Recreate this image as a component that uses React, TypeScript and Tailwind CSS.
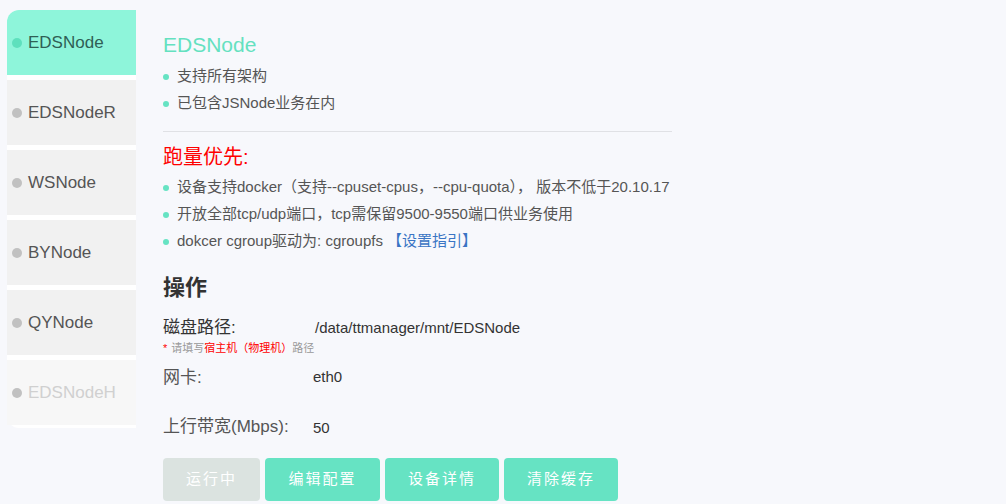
import { useState } from "react";

const nodes = ["EDSNode", "EDSNodeR", "WSNode", "BYNode", "QYNode", "EDSNodeH"];

const Dot = ({ className }: { className: string }) => (
  <span className={`inline-block w-[6px] h-[6px] rounded-full shrink-0 ${className}`} />
);

const Bullet = ({ children }: { children: React.ReactNode }) => (
  <li className="flex items-center gap-[8px] h-[27px] text-[15px] text-[#555]">
    <Dot className="bg-[#66e3c3]" />
    <span>{children}</span>
  </li>
);

const App = () => {
  const [active, setActive] = useState(0);

  return (
    <div
      className="min-h-screen w-full bg-[#f7f8fc] flex items-start"
      style={{ fontFamily: '"Liberation Sans", "Noto Sans CJK SC", sans-serif' }}
    >
      {/* sidebar */}
      <div className="ml-[7px] mt-[10px] w-[129px] bg-white rounded-tl-[12px] rounded-bl-[12px] pb-[3px] flex flex-col gap-[5px]">
        {nodes.map((name, i) => {
          const isActive = i === active;
          const disabled = i === nodes.length - 1;
          return (
            <div
              key={name}
              onClick={() => !disabled && setActive(i)}
              className={`h-[65px] flex items-center gap-[6px] pl-[5px] cursor-pointer ${
                i === 0 ? "rounded-tl-[12px]" : ""
              } ${isActive ? "bg-[#8ef5da]" : disabled ? "bg-[#f7f7f7]" : "bg-[#f1f1f1]"}`}
            >
              <span
                className={`inline-block w-[10px] h-[10px] rounded-full ${
                  isActive ? "bg-[#5ee0bd]" : "bg-[#c1c1c1]"
                }`}
              />
              <span
                className={`text-[17px] ${
                  isActive ? "text-[#2f5f55]" : disabled ? "text-[#d0d0d0]" : "text-[#555]"
                }`}
              >
                {name}
              </span>
            </div>
          );
        })}
      </div>

      {/* content */}
      <div className="pl-[27px] pt-[31px] w-[560px]">
        <h1 className="text-[21px] leading-[28px] text-[#64e1c0]">EDSNode</h1>
        <ul className="mt-[4px]">
          <Bullet>支持所有架构</Bullet>
          <Bullet>已包含JSNode业务在内</Bullet>
        </ul>

        <div className="mt-[14px] h-px bg-[#e0e1e5] w-[509px]" />

        <h2 className="mt-[11px] text-[20px] leading-[28px] text-[#ff0000]">跑量优先:</h2>
        <ul className="mt-[3px]">
          <Bullet>设备支持docker（支持--cpuset-cpus，--cpu-quota）， 版本不低于20.10.17</Bullet>
          <Bullet>开放全部tcp/udp端口，tcp需保留9500-9550端口供业务使用</Bullet>
          <Bullet>
            dokcer cgroup驱动为: cgroupfs <span className="text-[#3a75c4]">【设置指引】</span>
          </Bullet>
        </ul>

        <h3 className="mt-[18px] text-[22px] leading-[30px] font-bold text-[#333]">操作</h3>

        <div className="mt-[12px] flex items-center">
          <span className="w-[152px] text-[17px] text-[#333]">磁盘路径:</span>
          <span className="text-[15px] text-[#333]">/data/ttmanager/mnt/EDSNode</span>
        </div>
        <div className="text-[11px] leading-[14px] text-[#999] flex items-center gap-[4px]">
          <span className="text-[#ff0000]">*</span>
          <span>
            请填写<span className="text-[#ff0000]">宿主机（物理机）</span>路径
          </span>
        </div>

        <div className="mt-[10px] flex items-center">
          <span className="w-[150px] text-[17px] text-[#555]">网卡:</span>
          <span className="text-[15px] text-[#333]">eth0</span>
        </div>

        <div className="mt-[23px] flex items-center">
          <span className="w-[150px] text-[17px] text-[#555]">上行带宽(Mbps):</span>
          <span className="text-[15px] text-[#333] mt-[4px]">50</span>
        </div>

        <div className="mt-[18px] flex gap-[5px]">
          <button className="w-[97px] h-[43px] rounded-[4px] bg-[#dbe3e0] text-white text-[15px] tracking-[2px]">
            运行中
          </button>
          <button className="w-[115px] h-[43px] rounded-[4px] bg-[#66e3c3] text-white text-[15px] tracking-[2px]">
            编辑配置
          </button>
          <button className="w-[114px] h-[43px] rounded-[4px] bg-[#66e3c3] text-white text-[15px] tracking-[2px]">
            设备详情
          </button>
          <button className="w-[114px] h-[43px] rounded-[4px] bg-[#66e3c3] text-white text-[15px] tracking-[2px]">
            清除缓存
          </button>
        </div>
      </div>
    </div>
  );
};

export default App;
